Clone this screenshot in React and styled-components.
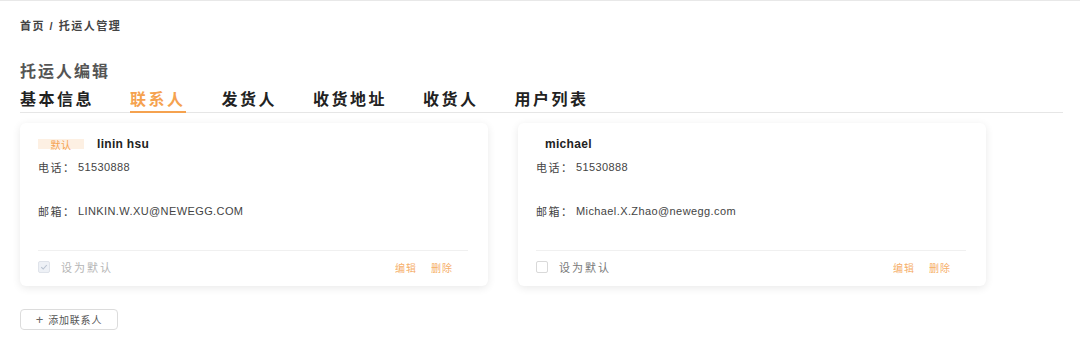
import React from 'react';
import styled, { createGlobalStyle } from 'styled-components';

const GlobalStyle = createGlobalStyle`
  body {
    margin: 0;
    background: #fff;
    font-family: 'Liberation Sans', 'Noto Sans CJK SC', sans-serif;
    color: #333;
  }
`;

const ORANGE = '#f5a24f';

const Page = styled.div`
  border-top: 1px solid #e8e8e8;
  padding: 0 17px 0 20px;
`;

const Breadcrumb = styled.div`
  padding-top: 18px;
  font-size: 11px;
  line-height: 14px;
  font-weight: 700;
  letter-spacing: 1.5px;
  color: #444;
`;

const Title = styled.h2`
  margin: 29px 0 0;
  font-size: 16px;
  line-height: 20px;
  font-weight: 700;
  letter-spacing: 2px;
  color: #555;
`;

const TabBar = styled.div`
  display: flex;
  gap: 36px;
  margin-top: 7px;
  border-bottom: 1px solid #e6e6e6;
`;

const Tab = styled.div`
  font-size: 16px;
  line-height: 22px;
  font-weight: 700;
  letter-spacing: 2.5px;
  color: ${p => (p.$active ? ORANGE : '#222')};
  border-bottom: 2px solid ${p => (p.$active ? ORANGE : 'transparent')};
  margin-bottom: -1px;
  cursor: pointer;
`;

const CardRow = styled.div`
  display: flex;
  gap: 30px;
  margin-top: 10px;
`;

const Card = styled.div`
  width: 468px;
  box-sizing: border-box;
  padding: 10px 20px 9px 18px;
  background: #fff;
  border-radius: 6px;
  box-shadow: 0 2px 8px rgba(0, 0, 0, 0.09);
`;

const CardHeader = styled.div`
  display: flex;
  align-items: center;
  height: 20px;
  margin-top: 1px;
  margin-bottom: -1px;
`;

const Badge = styled.span`
  display: inline-flex;
  align-items: center;
  justify-content: center;
  width: 46px;
  height: 10px;
  background: #fdf0e3;
  color: ${ORANGE};
  font-size: 10px;
  letter-spacing: 0.5px;
  margin-right: 13px;
`;

const Name = styled.span`
  font-size: 12px;
  font-weight: 700;
  letter-spacing: 0.3px;
  color: #222;
  padding-left: ${p => (p.$indent ? '9px' : '0')};
`;

const InfoRow = styled.div`
  display: flex;
  align-items: center;
  height: 16px;
  margin-top: ${p => p.$gap}px;
  font-size: 11px;
  color: #444;
`;

const Label = styled.span`
  letter-spacing: 1.5px;
  width: 40px;
`;

const Value = styled.span`
  font-size: 11px;
  letter-spacing: 0.4px;
`;

const Divider = styled.div`
  height: 1px;
  background: #f0f0f0;
  margin-top: 31px;
`;

const Footer = styled.div`
  display: flex;
  align-items: center;
  height: 20px;
  margin-top: 6px;
  padding-right: 15px;
`;

const CheckBox = styled.span`
  width: 10px;
  height: 10px;
  border: 1px solid ${p => (p.$checked ? '#dfe3ea' : '#d9d9d9')};
  background: ${p => (p.$checked ? '#eef1f6' : '#fff')};
  border-radius: 2px;
  display: inline-flex;
  align-items: center;
  justify-content: center;
  margin-right: 11px;
`;

const CheckText = styled.span`
  font-size: 11px;
  letter-spacing: 2px;
  color: ${p => (p.$muted ? '#b5b5b5' : '#777')};
`;

const Actions = styled.div`
  margin-left: auto;
  display: flex;
  gap: 14px;
`;

const ActionLink = styled.a`
  font-size: 10px;
  letter-spacing: 1px;
  color: ${ORANGE};
  opacity: 0.85;
  cursor: pointer;
`;

const AddButton = styled.button`
  margin-top: 23px;
  width: 98px;
  height: 21px;
  box-sizing: border-box;
  border: 1px solid #dcdcdc;
  border-radius: 4px;
  background: #fff;
  font-family: inherit;
  font-size: 10px;
  letter-spacing: 0.8px;
  color: #555;
  display: flex;
  align-items: center;
  justify-content: center;
  gap: 4px;
  cursor: pointer;
`;

const Plus = styled.span`
  font-size: 13px;
  font-weight: 300;
  line-height: 1;
  color: #666;
`;

const contacts = [
  { id: 1, name: 'linin hsu', phone: '51530888', email: 'LINKIN.W.XU@NEWEGG.COM', isDefault: true },
  { id: 2, name: 'michael', phone: '51530888', email: 'Michael.X.Zhao@newegg.com', isDefault: false },
];

const tabs = ['基本信息', '联系人', '发货人', '收货地址', '收货人', '用户列表'];

const App = () => (
  <>
    <GlobalStyle />
    <Page>
      <Breadcrumb>首页 / 托运人管理</Breadcrumb>
      <Title>托运人编辑</Title>
      <TabBar>
        {tabs.map(t => (
          <Tab key={t} $active={t === '联系人'}>{t}</Tab>
        ))}
      </TabBar>
      <CardRow>
        {contacts.map(c => (
          <Card key={c.id}>
            <CardHeader>
              {c.isDefault && <Badge>默认</Badge>}
              <Name $indent={!c.isDefault}>{c.name}</Name>
            </CardHeader>
            <InfoRow $gap={6}>
              <Label>电话：</Label>
              <Value>{c.phone}</Value>
            </InfoRow>
            <InfoRow $gap={28}>
              <Label>邮箱：</Label>
              <Value>{c.email}</Value>
            </InfoRow>
            <Divider />
            <Footer>
              <CheckBox $checked={c.isDefault}>
                {c.isDefault && (
                  <svg width="8" height="8" viewBox="0 0 8 8">
                    <path d="M1.2 4.2 L3.2 6 L6.8 2" fill="none" stroke="#b9c2d0" strokeWidth="1.1" />
                  </svg>
                )}
              </CheckBox>
              <CheckText $muted={c.isDefault}>设为默认</CheckText>
              <Actions>
                <ActionLink>编辑</ActionLink>
                <ActionLink>删除</ActionLink>
              </Actions>
            </Footer>
          </Card>
        ))}
      </CardRow>
      <AddButton>
        <Plus>+</Plus>
        <span>添加联系人</span>
      </AddButton>
    </Page>
  </>
);

export default App;
